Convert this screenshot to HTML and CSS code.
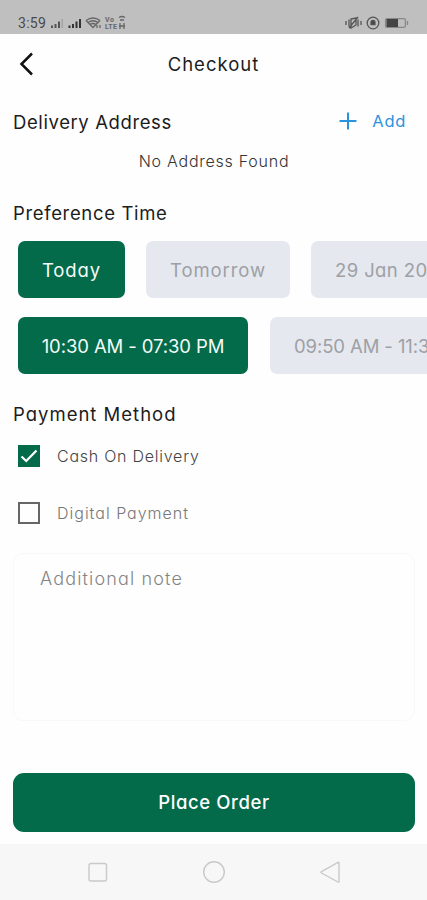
FILE: index.html
```html
<!DOCTYPE html>
<html lang="en">
<head>
<meta charset="utf-8">
<title>Checkout</title>
<link rel="stylesheet" href="styles.css">
</head>
<body>
<div class="status-bar">
  <span class="clock">3:59</span>
  <svg class="signal" width="76" height="16" viewBox="0 0 76 16">
    <g fill="#555"><rect x="1" y="10.5" width="2" height="2.5"/><rect x="4.5" y="9" width="2" height="4"/><rect x="8" y="6.5" width="2" height="6.5"/><rect x="11.5" y="4" width="1.5" height="9" fill="#a4a4a4"/></g>
    <g fill="#333"><rect x="18.5" y="10.5" width="2" height="2.5"/><rect x="22" y="9" width="2" height="4"/><rect x="25.5" y="6.5" width="2" height="6.5"/><rect x="29" y="4" width="2" height="9"/></g>
    <g fill="none" stroke="#666" stroke-width="1.3"><path d="M36 5.500q7-5 14 0M38 7.500q5-3.500 10 0M40 9.500q3-2 6 0"/><path d="M36 5.500l7 7 7-7"/><path d="M47 10v3M50 10v3"/></g>
    <g class="network"><text x="55" y="6.500" textLength="9">Vo</text><text x="55" y="14" textLength="12">LTE</text></g>
    <g fill="none" stroke="#666" stroke-width="1.3"><path d="M69 2.500q3-2 6 0M70 5h4M70 8v6M74 8v6M69 11h6"/></g>
  </svg>
  <svg class="device" width="66" height="16" viewBox="0 0 66 16">
    <g fill="none" stroke="#555" stroke-width="1.3">
      <path d="M1 6v4M4 4.500v7M13 4.500v7M16 6v4M6 4l5-1v7l-5 3zM4 13L13 2"/>
      <circle cx="28" cy="8" r="5.8"/><path d="M26 9.500V7.500a2 2 0 0 1 4 0v2z" fill="#444"/>
      <rect x="40.6" y="3.6" width="19.8" height="8.8" rx="1.5" stroke="#888"/><path d="M62.500 6v4" stroke="#888"/>
    </g>
    <rect x="41.5" y="4" width="11.5" height="8" fill="#444"/>
  </svg>
</div>
<header class="app-bar">
  <svg class="back" width="16" height="24" viewBox="0 0 16 24"><path d="M13 1.500L2.500 12 13 22.500" fill="none" stroke="#111" stroke-width="2.5"/></svg>
  <h1>Checkout</h1>
</header>
<main>
  <section class="address">
    <div class="address-head">
      <h2 class="t-address">Delivery Address</h2>
      <a class="add"><svg width="18" height="18" viewBox="0 0 18 18"><path d="M9 .5v17M.5 9h17" stroke="#2a93e0" stroke-width="2"/></svg><span>Add</span></a>
    </div>
    <p class="empty">No Address Found</p>
  </section>
  <section class="times">
    <h2 class="t-time">Preference Time</h2>
    <div class="chips">
      <div class="chip today active">Today</div>
      <div class="chip tomorrow">Tomorrow</div>
      <div class="chip later">29 Jan 2023</div>
    </div>
    <div class="chips slots">
      <div class="chip slot active">10:30 AM - 07:30 PM</div>
      <div class="chip next-slot">09:50 AM - 11:30 AM</div>
    </div>
  </section>
  <section class="payment">
    <h2 class="t-pay">Payment Method</h2>
    <div class="option"><span class="box checked"><svg width="22" height="22" viewBox="0 0 22 22"><path d="M3.500 11.500l4.700 4.500L18.500 5.500" fill="none" stroke="#fff" stroke-width="2.3"/></svg></span><span class="cash">Cash On Delivery</span></div>
    <div class="option"><span class="box"></span><span class="digital">Digital Payment</span></div>
  </section>
  <div class="note">Additional note</div>
  <div class="place-order">Place Order</div>
</main>
<nav class="system-nav">
  <svg width="427" height="56" viewBox="0 0 427 56" fill="none" stroke="#c9c9c9" stroke-width="1.4"><rect x="89" y="19.5" width="17.5" height="17.5" rx="2"/><circle cx="214" cy="28" r="10.3"/><path d="M339 19v18.500q0 1-1 .5L321.500 29q-1-.7 0-1.300L338 18.300q1-.4 1 .7z"/></svg>
</nav>
</body>
</html>
```
FILE: styles.css
```css
* { box-sizing: border-box; }

body {
  margin: 0;
  width: 427px;
  height: 900px;
  overflow: hidden;
  display: flex;
  flex-direction: column;
  background: #fefefe;
  color: #1c1c1c;
  font-family: Inter, "Noto Sans", sans-serif;
  font-feature-settings: "cv11" 1, "calt" 0;
}

h1, h2, p { margin: 0; font-weight: 400; white-space: nowrap; }

.status-bar {
  height: 34px;
  flex: none;
  display: flex;
  align-items: flex-start;
  padding: 15px 16px 0 18px;
  background: #bfbfbf;
}
.clock { width: 32px; font: 14px/17px Roboto, sans-serif; letter-spacing: .3px; color: #4a4a4a; }
.network { font: bold 7px Roboto, sans-serif; fill: #666; }
.device { margin-left: auto; }

.app-bar {
  height: 60px;
  flex: none;
  display: grid;
  grid-template-columns: 40px 1fr 40px;
  align-items: center;
  padding: 0 19px;
}
.app-bar h1 { margin-top: -1px; font-size: 18.5px; letter-spacing: 1px; text-align: center; }

main { flex: 1; display: flex; flex-direction: column; padding: 0 12px 0 13px; }

h2 { font-size: 18.5px; line-height: 26px; }
.address { height: 105px; padding-top: 15px; }
.address-head { display: flex; justify-content: space-between; align-items: center; }
.t-address { letter-spacing: .6px; }
.add { display: flex; align-items: center; gap: 15px; margin: -2px 9px 0 0; color: #2a93e0; font-size: 16.5px; letter-spacing: .7px; }
.empty { margin-top: 14px; font-size: 16px; line-height: 24px; font-weight: 350; letter-spacing: .75px; text-align: center; color: #333; }

.times { height: 201px; padding-top: 1px; }
.t-time { letter-spacing: .65px; }
.chips { display: flex; gap: 21px; margin: 15px -12px 19px 5px; overflow: hidden; }
.chips.slots { gap: 22px; margin-top: 0; }
.chip {
  flex: none;
  height: 57px;
  line-height: 59px;
  border-radius: 7px;
  background: #e5e8ef;
  color: #9da0a5;
  font-size: 18.5px;
  text-align: center;
  white-space: nowrap;
}
.chip.active { background: #036a4a; color: #f4fbf8; }
.today { width: 107px; letter-spacing: .9px; }
.tomorrow { width: 144px; letter-spacing: .9px; }
.later { width: 160px; padding-left: 24px; text-align: left; letter-spacing: .4px; }
.slot { width: 230px; letter-spacing: -.1px; }
.next-slot { width: 231px; padding-left: 24px; text-align: left; letter-spacing: -.1px; }

.payment { height: 153px; padding-top: 1px; }
.t-pay { line-height: 27px; letter-spacing: 1px; }
.option { display: flex; align-items: center; gap: 17px; height: 57px; padding-left: 5px; font-size: 16px; font-weight: 350; white-space: nowrap; }
.box { width: 22px; height: 22px; margin-top: -1px; border: 2px solid #666; }
.box.checked { border: 0; background: #036a4a; }
.box svg { display: block; }
.cash, .digital { margin-top: -2px; }
.cash { letter-spacing: .75px; color: #444; }
.digital { letter-spacing: 1px; color: #777; }

.note {
  height: 168px;
  padding: 12px 26px;
  border: 1px solid #f8f8f8;
  border-radius: 10px;
  font-size: 18px;
  line-height: 26px;
  font-weight: 300;
  letter-spacing: 1.15px;
  color: #858585;
}
.place-order {
  height: 59px;
  margin-top: 52px;
  border-radius: 11px;
  background: #036a4a;
  color: #fff;
  font-size: 18.5px;
  font-weight: 550;
  line-height: 59px;
  letter-spacing: .6px;
  text-align: center;
}
.system-nav { height: 56px; flex: none; background: #f7f7f7; }
.system-nav svg { display: block; }
```
